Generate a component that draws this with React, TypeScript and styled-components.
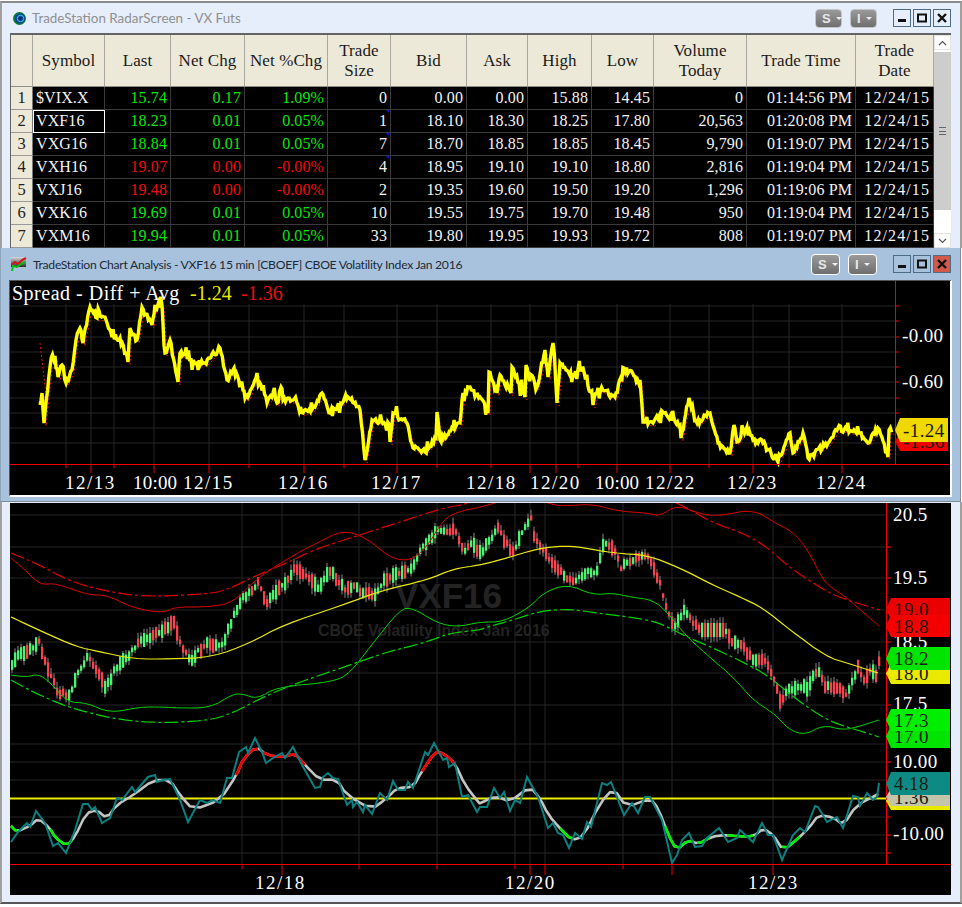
import { useMemo } from 'react';
import styled, { createGlobalStyle } from 'styled-components';

const GlobalStyle = createGlobalStyle`
  html, body { margin: 0; padding: 0; background: #fff; }
`;

const serif = `'Liberation Serif', 'Times New Roman', serif`;
const ui = `'Lato', 'Open Sans', sans-serif`;

const Page = styled.div`
  width: 962px;
  height: 907px;
  padding-top: 1px;
  box-sizing: border-box;
  overflow: hidden;
  background: #fff;
`;

const RadarWindow = styled.section`
  width: 962px;
  height: 247px;
  box-sizing: border-box;
  border-top: 2px solid #8b8b8b;
  border-left: 2px solid #a0a0a0;
  border-right: 2px solid #a0a0a0;
  background: #e6eefc;
  padding-left: 8px;
`;

const TitleBar = styled.header<{ $height: number; $active?: boolean }>`
  height: ${p => p.$height}px;
  margin-left: ${p => (p.$active ? 0 : -8)}px;
  padding: 0 9px 0 ${p => (p.$active ? 10 : 11)}px;
  display: flex;
  align-items: center;
  font-family: ${ui};
  font-size: ${p => (p.$active ? 12.2 : 13.4)}px;
  letter-spacing: ${p => (p.$active ? -0.3 : 0)}px;
  color: ${p => (p.$active ? '#1c2a38' : '#8f8f8f')};
`;

const TitleText = styled.span`
  margin-left: 6px;
  flex: 1;
  white-space: nowrap;
`;

const DropButton = styled.button<{ $active?: boolean }>`
  width: ${p => (p.$active ? 29 : 27)}px;
  height: ${p => (p.$active ? 21 : 19)}px;
  margin-right: 8px;
  padding: 0 0 0 6px;
  display: flex;
  align-items: center;
  gap: 5px;
  box-sizing: border-box;
  border: ${p => (p.$active ? '1px solid #fff' : '1px solid #c4c4c4')};
  border-radius: 4px;
  background: linear-gradient(#9a9a9a, #6e6e6e);
  color: #e8e8e8;
  font: bold 13px 'Liberation Sans', Arial, sans-serif;
  &::after {
    content: '';
    border-left: 3px solid transparent;
    border-right: 3px solid transparent;
    border-top: 3px solid #f0f0f0;
  }
`;

const CaptionGroup = styled.div`
  display: flex;
  gap: 2px;
  margin-left: 8px;
`;

const CaptionButton = styled.div<{ $close?: boolean }>`
  display: flex;
  align-items: center;
  justify-content: center;
  border: 1px solid #4d6c8a;
  box-sizing: content-box;
  width: 16px;
  height: 16px;
  background: ${p => (p.$close ? '#cf5a4a' : 'transparent')};
`;

const TableFrame = styled.div`
  display: flex;
  width: 941px;
  border-top: 2px solid #646464;
`;

const Grid = styled.div`
  width: 924px;
  border-left: 1px solid #646464;
  box-sizing: border-box;
`;

const columns = '22px 72px 66px 74px 83px 63px 76px 61px 64px 62px 93px 109px 78px';

const HeaderRow = styled.div`
  display: grid;
  grid-template-columns: ${columns};
  height: 52px;
`;

const HeaderCell = styled.div`
  display: flex;
  align-items: center;
  justify-content: center;
  box-sizing: border-box;
  background: #ece9d8;
  border-right: 1px solid #a8a8a0;
  border-bottom: 1px solid #8e8e88;
  text-align: center;
  white-space: pre;
  font: 17px/20px ${serif};
  color: #1a1a1a;
  letter-spacing: 0.1px;
`;

const DataRow = styled.div`
  display: grid;
  grid-template-columns: ${columns};
  height: 23px;
`;

const RowHead = styled.div`
  display: flex;
  align-items: center;
  justify-content: center;
  box-sizing: border-box;
  background: #ece9d8;
  border-right: 1px solid #777;
  border-bottom: 1px solid #999;
  font: 16.5px ${serif};
  color: #222;
`;

const toneColors = { up: '#0be80b', down: '#f20d0d', plain: '#f4f4f4' };

const Cell = styled.div<{
  $tone?: keyof typeof toneColors;
  $left?: boolean;
  $selected?: boolean;
  $tick?: boolean;
  $wide?: boolean;
}>`
  position: relative;
  display: flex;
  align-items: center;
  justify-content: ${p => (p.$left ? 'flex-start' : 'flex-end')};
  padding: 0 3px;
  box-sizing: border-box;
  background: #000;
  border-right: 1px solid #3a3a3a;
  border-bottom: 1px solid #3a3a3a;
  outline: ${p => (p.$selected ? '1px solid #fff' : 'none')};
  outline-offset: -1px;
  font: 16px ${serif};
  letter-spacing: ${p => (p.$wide ? 1.1 : 0.1)}px;
  white-space: nowrap;
  color: ${p => toneColors[p.$tone ?? 'plain']};
  &::after {
    content: '';
    display: ${p => (p.$tick ? 'block' : 'none')};
    position: absolute;
    top: 0;
    right: 1px;
    border-top: 3px solid #1010e0;
    border-left: 3px solid transparent;
  }
`;

const Scrollbar = styled.div`
  width: 17px;
  display: flex;
  flex-direction: column;
  background: #fff;
`;

const ScrollButton = styled.div`
  height: 15px;
  display: flex;
  align-items: center;
  justify-content: center;
  background: #fdfdfd;
  border: 1px solid #e4e4e4;
  box-sizing: border-box;
`;

const ScrollThumb = styled.div`
  height: 158px;
  margin-top: 2px;
  display: flex;
  align-items: center;
  justify-content: center;
  background: #cdcdcd;
`;

const Grip = styled.div`
  width: 7px;
  height: 6px;
  border-top: 1px solid #666;
  border-bottom: 1px solid #666;
  position: relative;
  &::after {
    content: '';
    position: absolute;
    left: 0;
    right: 0;
    top: 2.5px;
    height: 1px;
    background: #666;
  }
`;

const ScrollRest = styled.div`
  flex: 1;
  background: #fff;
`;

const ChartWindow = styled.section`
  width: 961px;
  height: 254px;
  box-sizing: border-box;
  background: #a8c2de;
  border-left: 1px solid #8fa5bc;
  border-right: 1px solid #7f8c9a;
  border-bottom: 1px solid #7f8c9a;
`;

const ChartBody = styled.div`
  margin-left: 8px;
  width: 943px;
  box-sizing: border-box;
  border-top: 1px solid #555;
  border-left: 1px solid #555;
  border-right: 2px solid #fff;
  border-bottom: 2px solid #fff;
`;

const LowerWindow = styled.section`
  width: 962px;
  height: 402px;
  box-sizing: border-box;
  background: #e6eefc;
  border-left: 2px solid #a0a0a0;
  border-right: 2px solid #a0a0a0;
  border-bottom: 2px solid #555;
  padding: 1px 0 0 8px;
`;

const ChartSvg = styled.svg`
  display: block;
  background: #000;
`;

const AxisText = styled.text<{ $spacing?: number }>`
  font-family: ${serif};
  font-size: 19px;
  letter-spacing: ${p => p.$spacing ?? 0.35}px;
  fill: #fff;
`;

const TagText = styled.text`
  font-family: ${serif};
  font-size: 19px;
  letter-spacing: 0.4px;
  fill: #1a1a10;
`;

const HeadingText = styled.text<{ $fill: string; $spacing: number }>`
  font-family: ${serif};
  font-size: 20px;
  letter-spacing: ${p => p.$spacing}px;
  fill: ${p => p.$fill};
`;

const Watermark = styled.text<{ $size: number }>`
  font-family: 'Liberation Sans', Arial, sans-serif;
  font-weight: bold;
  font-size: ${p => p.$size}px;
  fill: #232323;
`;

type Pt = [number, number];

// flat x,y list -> points
const pts = (flat: number[]): Pt[] => {
  const out: Pt[] = [];
  for (let i = 0; i < flat.length; i += 2) out.push([flat[i], flat[i + 1]]);
  return out;
};

// coordinates read off the 3x crops
const traced = (ox: number, oy: number, flat: number[]): Pt[] =>
  pts(flat).map(([x, y]) => [ox + x / 3, oy + y / 3] as Pt);

const line = (p: Pt[]) => p.map(([x, y]) => `${x.toFixed(1)},${y.toFixed(1)}`).join(' ');

// corner cutting, keeps both ends
const smooth = (p: Pt[], rounds = 2): Pt[] => {
  let cur = p;
  for (let r = 0; r < rounds; r++) {
    const next: Pt[] = [cur[0]];
    for (let i = 0; i < cur.length - 1; i++) {
      const [x0, y0] = cur[i];
      const [x1, y1] = cur[i + 1];
      next.push([x0 * 0.75 + x1 * 0.25, y0 * 0.75 + y1 * 0.25]);
      next.push([x0 * 0.25 + x1 * 0.75, y0 * 0.25 + y1 * 0.75]);
    }
    next.push(cur[cur.length - 1]);
    cur = next;
  }
  return cur;
};

const rng = (seed: number) => () => {
  seed = (seed * 16807) % 2147483647;
  return seed / 2147483647;
};

const at = (p: Pt[], x: number) => {
  for (let i = 1; i < p.length; i++) {
    if (x <= p[i][0]) {
      const [x0, y0] = p[i - 1];
      const [x1, y1] = p[i];
      return y0 + ((y1 - y0) * (x - x0)) / Math.max(x1 - x0, 0.01);
    }
  }
  return p[p.length - 1][1];
};

const rows = [
  ['$VIX.X', '15.74', '0.17', '1.09%', '0', '0.00', '0.00', '15.88', '14.45', '0', '01:14:56 PM', '12/24/15'],
  ['VXF16', '18.23', '0.01', '0.05%', '1', '18.10', '18.30', '18.25', '17.80', '20,563', '01:20:08 PM', '12/24/15'],
  ['VXG16', '18.84', '0.01', '0.05%', '7', '18.70', '18.85', '18.85', '18.45', '9,790', '01:19:07 PM', '12/24/15'],
  ['VXH16', '19.07', '0.00', '-0.00%', '4', '18.95', '19.10', '19.10', '18.80', '2,816', '01:19:04 PM', '12/24/15'],
  ['VXJ16', '19.48', '0.00', '-0.00%', '2', '19.35', '19.60', '19.50', '19.20', '1,296', '01:19:06 PM', '12/24/15'],
  ['VXK16', '19.69', '0.01', '0.05%', '10', '19.55', '19.75', '19.70', '19.48', '950', '01:19:04 PM', '12/24/15'],
  ['VXM16', '19.94', '0.01', '0.05%', '33', '19.80', '19.95', '19.93', '19.72', '808', '01:19:07 PM', '12/24/15'],
];

const headers = ['', 'Symbol', 'Last', 'Net Chg', 'Net %Chg', 'Trade\nSize', 'Bid', 'Ask', 'High', 'Low', 'Volume\nToday', 'Trade Time', 'Trade\nDate'];

const spreadTrace = pts([
  40, 405, 42, 393, 44, 423, 50, 367, 55, 356, 58, 377, 62, 365, 66, 383, 72, 370, 76, 340, 80, 328, 83, 343, 90, 307,
  97, 318, 105, 317, 112, 337, 120, 338, 128, 362, 130, 328, 137, 340, 142, 307, 152, 325, 155, 305, 162, 305, 165, 353,
  170, 340, 178, 382, 180, 353, 197, 363, 205, 363, 220, 348, 227, 380, 233, 370, 242, 383, 245, 398, 248, 397, 257, 373,
  267, 403, 273, 393, 277, 403, 281, 387, 283, 400, 293, 400, 303, 413, 315, 407, 322, 393, 330, 413, 348, 397, 360, 410,
  365, 460, 372, 420, 389, 424, 390, 442, 393, 413, 407, 423, 413, 448, 425, 452, 436, 438, 437, 412, 440, 440, 460, 423,
  463, 393, 470, 387, 480, 397, 488, 413, 489, 372, 497, 393, 500, 375, 511, 393, 512, 367, 525, 397, 526, 365, 537, 387,
  545, 350, 548, 377, 553, 343, 557, 403, 560, 363, 573, 375, 583, 368, 593, 405, 598, 388, 615, 397, 624, 368, 640, 380,
  643, 422, 653, 423, 663, 412, 680, 425, 681, 438, 689, 398, 697, 423, 710, 413, 718, 443, 730, 453, 734, 425, 737, 442,
  747, 427, 753, 440, 763, 443, 778, 462, 790, 433, 793, 453, 803, 433, 808, 458, 828, 443, 838, 428, 860, 433, 868, 443,
  878, 428, 888, 457, 889, 430, 893, 432,
]);

const priceMid = pts([
  11, 667, 15, 655, 28, 650, 38, 643, 45, 663, 57, 693, 68, 695, 77, 673, 87, 655, 97, 673, 105, 688, 115, 667, 127, 657,
  137, 643, 147, 637, 163, 630, 173, 623, 178, 640, 190, 663, 197, 652, 207, 642, 220, 648, 230, 623, 240, 600, 257, 583,
  265, 603, 277, 588, 287, 580, 295, 567, 310, 580, 317, 590, 328, 570, 345, 590, 353, 587, 373, 597, 383, 580, 395, 573,
  408, 572, 420, 550, 437, 530, 455, 530, 463, 552, 470, 543, 480, 553, 490, 538, 497, 528, 503, 540, 512, 552, 523, 527,
  530, 518, 533, 537, 545, 555, 557, 570, 570, 582, 587, 573, 595, 573, 603, 543, 613, 548, 620, 567, 633, 560, 647, 555,
  653, 570, 660, 587, 665, 607, 673, 630, 683, 608, 693, 623, 700, 630, 723, 630, 733, 643, 743, 647, 753, 663, 762, 657,
  772, 677, 780, 703, 788, 688, 807, 688, 817, 667, 823, 687, 838, 688, 845, 695, 857, 667, 863, 680, 870, 670, 875, 677,
  878, 663,
]);

const redSolid = smooth(pts([
  11, 558, 23, 568, 40, 585, 55, 583, 88, 595, 107, 595, 133, 608, 163, 613, 175, 607, 207, 607, 233, 603, 257, 578, 297, 553,
  317, 543, 343, 530, 367, 538, 390, 558, 410, 561, 427, 547, 443, 520, 457, 512, 480, 507, 492, 504, 510, 498, 535, 498, 550, 504,
  563, 506, 593, 504, 617, 511, 647, 513, 660, 516, 677, 505, 700, 514, 720, 516, 753, 509, 777, 524, 793, 532, 808, 550,
  823, 580, 833, 589, 843, 595, 857, 607, 879, 626,
]));

const redDash = smooth(pts([
  11, 553, 40, 565, 67, 580, 100, 590, 143, 597, 207, 594, 227, 590, 257, 575, 287, 563, 313, 550, 350, 538, 400, 522, 443, 508,
  467, 504, 490, 495, 660, 495, 687, 508, 713, 523, 743, 533, 767, 547, 790, 568, 827, 592, 847, 600, 880, 610,
]));

const yellowAvg = smooth(pts([
  11, 617, 43, 632, 77, 647, 97, 651, 133, 659, 170, 659, 213, 657, 250, 643, 283, 625, 343, 605, 383, 590, 427, 580, 453, 569,
  480, 565, 500, 560, 540, 548, 563, 546, 580, 547, 613, 553, 647, 555, 680, 568, 713, 585, 740, 597, 763, 608, 790, 630, 827, 657,
  847, 663, 878, 673,
]));

const greenSolid = smooth(pts([
  11, 675, 27, 677, 38, 674, 50, 682, 67, 702, 87, 703, 110, 713, 140, 707, 163, 707, 177, 708, 210, 708, 233, 694, 243, 694, 257, 699,
  277, 687, 333, 682, 350, 673, 370, 647, 400, 609, 413, 608, 437, 623, 457, 627, 480, 622, 503, 622, 530, 607, 543, 593, 567, 584,
  593, 595, 613, 593, 630, 597, 653, 600, 667, 612, 687, 637, 713, 660, 733, 677, 753, 700, 773, 713, 780, 720, 790, 730, 805, 735,
  823, 725, 843, 730, 857, 727, 879, 720,
]));

const greenDash = smooth(pts([
  11, 680, 33, 692, 67, 707, 110, 718, 150, 723, 207, 721, 233, 713, 263, 697, 297, 683, 350, 665, 387, 652, 427, 642, 450, 633, 480, 630,
  487, 627, 513, 620, 540, 611, 570, 609, 597, 613, 637, 618, 660, 623, 687, 637, 713, 648, 743, 662, 767, 675, 797, 700, 827, 720,
  847, 727, 867, 733, 879, 737,
]));

const oscFast = pts([
  11, 842, 18, 832, 22, 828, 27, 823, 30, 827, 36, 811, 45, 823, 53, 846, 58, 843, 66, 853, 75, 830, 83, 804, 88, 804, 92, 810, 95, 807,
  102, 823, 110, 818, 117, 798, 122, 800, 132, 787, 135, 792, 148, 777, 155, 775, 157, 782, 163, 780, 170, 779, 180, 800, 188, 822,
  200, 800, 207, 803, 213, 800, 220, 803, 227, 778, 232, 778, 239, 752, 246, 747, 248, 753, 255, 738, 262, 752, 266, 763, 273, 758,
  282, 753, 285, 758, 293, 747, 302, 765, 315, 788, 320, 787, 323, 777, 328, 773, 333, 778, 338, 779, 347, 805, 352, 800, 353, 807,
  357, 802, 363, 812, 365, 805, 372, 814, 380, 793, 387, 800, 393, 781, 398, 790, 405, 790, 408, 782, 413, 788, 425, 752, 428, 755,
  434, 743, 443, 760, 447, 758, 449, 767, 455, 763, 462, 797, 468, 795, 477, 812, 480, 807, 487, 807, 494, 788, 500, 798, 504, 792,
  510, 811, 515, 800, 520, 803, 527, 777, 538, 797, 548, 828, 553, 823, 558, 833, 563, 835, 569, 848, 575, 833, 582, 839, 587, 822,
  591, 827, 602, 783, 607, 785, 611, 782, 624, 815, 632, 803, 638, 813, 645, 797, 650, 797, 662, 820, 672, 863, 677, 855, 682, 840,
  689, 833, 695, 847, 702, 846, 707, 838, 719, 828, 728, 842, 737, 838, 740, 830, 753, 842, 762, 823, 768, 835, 773, 835, 782, 860,
  793, 835, 800, 828, 805, 832, 815, 806, 818, 807, 827, 822, 837, 817, 843, 828, 853, 796, 858, 797, 860, 806, 867, 793, 873, 800,
  877, 797, 879, 783,
]);

const oscSlow: Pt[] = smooth([
  ...traced(0, 720, [
    33, 318, 50, 335, 90, 318, 115, 295, 150, 325, 165, 352, 200, 378, 225, 350, 258, 280, 290, 270, 320, 295, 350, 255, 400, 225, 460, 180,
    510, 180, 540, 225, 580, 270, 660, 240, 710, 165, 730, 115, 770, 80, 800, 105, 850, 112, 885, 100, 915, 135, 960, 180, 1010, 178,
    1040, 225, 1115, 268, 1160, 235, 1190, 205, 1240, 200, 1265, 155, 1305, 95, 1330, 100, 1365, 130, 1395, 195, 1438, 250,
  ]),
  ...traced(480, 720, [
    0, 250, 45, 228, 90, 245, 150, 200, 180, 235, 205, 285, 240, 325, 275, 360, 310, 350, 360, 250, 400, 205, 440, 262, 510, 235, 535, 265,
    565, 345, 590, 390, 625, 360, 655, 372, 695, 350, 735, 345, 770, 348, 820, 350, 850, 325, 880, 345, 910, 392, 960, 350, 990, 320,
    1015, 285, 1060, 292, 1090, 315, 1130, 255, 1195, 222,
  ]),
], 1);

const oscBands: { from: number; to: number; color: string }[] = [
  { from: 11, to: 17, color: '#00f000' },
  { from: 50, to: 72, color: '#00f000' },
  { from: 236, to: 258, color: '#f00000' },
  { from: 263, to: 305, color: '#f00000' },
  { from: 422, to: 455, color: '#f00000' },
  { from: 560, to: 572, color: '#00f000' },
  { from: 665, to: 693, color: '#00f000' },
  { from: 697, to: 710, color: '#00f000' },
  { from: 727, to: 753, color: '#00f000' },
  { from: 782, to: 800, color: '#00f000' },
];

const band = (p: Pt[], from: number, to: number): Pt[] => [
  [from, at(p, from)],
  ...p.filter(([x]) => x > from && x < to),
  [to, at(p, to)],
];

function Tag({ top, height, fill, label, x = 886, right = 950 }: { top: number; height: number; fill: string; label: string; x?: number; right?: number }) {
  const mid = top + height / 2;
  return (
    <g>
      <polygon points={`${x},${mid} ${x + 5},${top} ${right},${top} ${right},${top + height} ${x + 5},${top + height}`} fill={fill} />
      <TagText x={x + 8} y={mid + 6.5}>
        {label}
      </TagText>
    </g>
  );
}

function WindowButtons({ active }: { active?: boolean }) {
  return (
    <>
      <DropButton $active={active}>S</DropButton>
      <DropButton $active={active}>I</DropButton>
      <CaptionGroup>
        <CaptionButton>
          <svg width="10" height="10" viewBox="0 0 10 10">
            <rect x="1" y="6" width="8" height="3" fill="#111" />
          </svg>
        </CaptionButton>
        <CaptionButton>
          <svg width="10" height="10" viewBox="0 0 10 10">
            <rect x="1" y="1.5" width="8" height="7" fill="none" stroke="#111" strokeWidth="2" />
          </svg>
        </CaptionButton>
        <CaptionButton $close={active}>
          <svg width="10" height="10" viewBox="0 0 10 10">
            <path d="M1 1 L9 9 M9 1 L1 9" stroke="#111" strokeWidth="2.4" />
          </svg>
        </CaptionButton>
      </CaptionGroup>
    </>
  );
}

function RadarIcon() {
  return (
    <svg width="13" height="13" viewBox="0 0 13 13">
      <circle cx="6.5" cy="6.5" r="6.5" fill="#0a7a3a" />
      <circle cx="7" cy="6.5" r="5" fill="#0d3f9e" />
      <circle cx="7.5" cy="6.5" r="3.2" fill="none" stroke="#3fd0d8" strokeWidth="1" />
      <circle cx="7.5" cy="6.5" r="1.2" fill="#16245e" />
    </svg>
  );
}

function ChartIcon() {
  return (
    <svg width="16" height="15" viewBox="0 0 16 15">
      <defs>
        <linearGradient id="chartIconBg" x1="0" y1="0" x2="0" y2="1">
          <stop offset="0" stopColor="#d8d8d8" />
          <stop offset="1" stopColor="#2a2a2a" />
        </linearGradient>
      </defs>
      <rect x="0" y="0" width="15" height="10" fill="url(#chartIconBg)" />
      <path d="M0 8 L4 5 L7 7 L11 3 L15 1" fill="none" stroke="#d01818" strokeWidth="2" />
      <path d="M1 14 L2 9 L6 10 L10 7 L14 5" fill="none" stroke="#14b814" strokeWidth="2" />
    </svg>
  );
}

function SpreadChart() {
  const jagged = useMemo(() => {
    const r = rng(41);
    const out: Pt[] = [];
    for (let i = 1; i < spreadTrace.length; i++) {
      const [x0, y0] = spreadTrace[i - 1];
      const [x1, y1] = spreadTrace[i];
      const n = Math.max(1, Math.round((x1 - x0) / 1.2));
      for (let k = 0; k < n; k++) {
        const t = k / n;
        const spike = r() < 0.15 ? (r() - 0.5) * 20 : (r() - 0.5) * 6;
        out.push([x0 + (x1 - x0) * t, y0 + (y1 - y0) * t + (k === 0 ? 0 : spike)]);
      }
    }
    return out;
  }, []);
  const average = spreadTrace.map(([x, y]) => [x + 2, y + 3] as Pt);
  const hLines = Array.from({ length: 10 }, (_, i) => Math.round(306 + i * 15.25));
  const minor = [66, 114, 249, 344, 437, 491, 578, 709, 789];
  const major = [91, 154, 209, 304, 397, 530, 556, 617, 670, 753, 842];
  const dates: [string, number, number][] = [
    ['12/13', 65, 1.5], ['10:00', 133, 0.2], ['12/15', 183, 1.5], ['12/16', 278, 1.5], ['12/17', 371, 1.5], ['12/18', 466, 1.5],
    ['12/20', 530, 1.5], ['10:00', 595, 0.2], ['12/22', 645, 1.5], ['12/23', 727, 1.5], ['12/24', 816, 1.5],
  ];
  return (
    <ChartSvg width="940" height="214" viewBox="10 281 940 214">
      {hLines.map(y => (
        <line key={y} x1="10" x2="895" y1={y} y2={y} stroke="#242424" />
      ))}
      {[...minor, ...major].map(x => (
        <line key={x} x1={x} x2={x} y1="304" y2="464" stroke="#242424" />
      ))}
      <polyline points={line([[40, 343], [46, 395]])} fill="none" stroke="#e01010" strokeDasharray="2 2" />
      <polyline points={line(average)} fill="none" stroke="#e01010" strokeDasharray="2 2" />
      <polyline points={line(jagged)} fill="none" stroke="#ffff00" strokeWidth="3.4" strokeLinejoin="miter" />
      <line x1="10" x2="950" y1="464.5" y2="464.5" stroke="#f00000" />
      <line x1="895.5" x2="895.5" y1="281" y2="464" stroke="#f00000" />
      {hLines.map(y => (
        <line key={y} x1="895" x2="899" y1={y} y2={y} stroke="#f00000" />
      ))}
      {minor.map(x => (
        <line key={x} x1={x} x2={x} y1="464" y2="468" stroke="#f00000" />
      ))}
      {major.map(x => (
        <line key={x} x1={x} x2={x} y1="464" y2="473" stroke="#f00000" />
      ))}
      <AxisText x="902" y="342">-0.00</AxisText>
      <AxisText x="902" y="388">-0.60</AxisText>
      {dates.map(([d, x, s]) => (
        <AxisText key={d + x} x={x} y="489" $spacing={s}>
          {d}
        </AxisText>
      ))}
      <HeadingText x="12" y="300" $fill="#fff" $spacing={0.5}>Spread - Diff + Avg</HeadingText>
      <HeadingText x="190" y="300" $fill="#e8e800" $spacing={0}>-1.24</HeadingText>
      <HeadingText x="241" y="300" $fill="#e81010" $spacing={0}>-1.36</HeadingText>
      <Tag top={432} height={19} fill="#ee0000" label="-1.36" x={895} right={948} />
      <Tag top={418} height={24} fill="#f0d800" label="-1.24" x={895} right={948} />
    </ChartSvg>
  );
}

function PriceChart() {
  const candles = useMemo(() => {
    const r = rng(977);
    const out: { x: number; top: number; h: number; wt: number; wb: number; up: boolean }[] = [];
    for (let x = 11; x < 880; x += 3) {
      const flat = x > 700 && x < 725;
      const mid = at(priceMid, x) + (flat ? 0 : (r() - 0.5) * 4);
      const h = flat ? 14 : 4 + r() * 11;
      const slope = at(priceMid, x + 6) - at(priceMid, x - 6);
      const up = flat ? Math.round((x - 11) / 3) % 2 === 0 : r() + slope * 0.03 < 0.5;
      out.push({ x, top: mid - h / 2, h, wt: r() * 6, wb: r() * 6, up });
    }
    return out;
  }, []);
  const hLines = [515, 547, 578, 610, 642, 673, 705, 744, 762, 780, 817, 835, 853];
  const minor = [242, 359, 437, 515, 623];
  const major = [282, 530, 545, 672, 773];
  return (
    <ChartSvg width="941" height="392" viewBox="10 503 941 392">
      {hLines.map(y => (
        <line key={y} x1="10" x2="886" y1={y} y2={y} stroke="#242424" />
      ))}
      {[...minor, ...major].map(x => (
        <line key={x} x1={x} x2={x} y1="503" y2="864" stroke="#242424" />
      ))}
      <Watermark x="395" y="608" $size={35}>VXF16</Watermark>
      <Watermark x="318" y="636" $size={15.8}>CBOE Volatility Index Jan 2016</Watermark>
      {candles.map(c => (
        <g key={c.x}>
          <line x1={c.x + 1} x2={c.x + 1} y1={c.top - c.wt} y2={c.top + c.h + c.wb} stroke="#8a8a8a" />
          <rect x={c.x} y={c.top} width="2.3" height={c.h} fill={c.up ? '#4cf272' : '#f8434f'} />
        </g>
      ))}
      <polyline points={line(redSolid)} fill="none" stroke="#dc0000" />
      <polyline points={line(redDash)} fill="none" stroke="#e00000" strokeWidth="1.2" strokeDasharray="14 3 3 3" />
      <polyline points={line(yellowAvg)} fill="none" stroke="#eaea10" strokeWidth="1.2" />
      <polyline points={line(greenSolid)} fill="none" stroke="#00d400" />
      <polyline points={line(greenDash)} fill="none" stroke="#00d400" strokeWidth="1.2" strokeDasharray="14 3 3 3" />
      <line x1="10" x2="886" y1="798.5" y2="798.5" stroke="#eeee00" strokeWidth="2" />
      <polyline points={line(oscSlow)} fill="none" stroke="#c4c4c4" strokeWidth="2.6" strokeLinejoin="round" />
      {oscBands.map(b => (
        <polyline key={b.from} points={line(band(oscSlow, b.from, b.to))} fill="none" stroke={b.color} strokeWidth="2.6" strokeLinejoin="round" />
      ))}
      <polyline points={line(oscFast)} fill="none" stroke="#0c8080" strokeWidth="2" />
      <line x1="10" x2="951" y1="864.5" y2="864.5" stroke="#f00000" />
      <line x1="886.5" x2="886.5" y1="503" y2="864" stroke="#f00000" />
      {[547, 578, 610, 642, 673, 705, 762, 817, 835, 853].map(y => (
        <line key={y} x1="886" x2="891" y1={y} y2={y} stroke="#f00000" />
      ))}
      {minor.map(x => (
        <line key={x} x1={x} x2={x} y1="864" y2="869" stroke="#f00000" />
      ))}
      {major.map(x => (
        <line key={x} x1={x} x2={x} y1="864" y2="875" stroke="#f00000" />
      ))}
      <AxisText x="893" y="521">20.5</AxisText>
      <AxisText x="893" y="584">19.5</AxisText>
      <AxisText x="893" y="648">18.5</AxisText>
      <AxisText x="893" y="710">17.5</AxisText>
      <AxisText x="893" y="768">10.00</AxisText>
      <AxisText x="893" y="840">-10.00</AxisText>
      <Tag top={598} height={22} fill="#ea0000" label="19.0" />
      <Tag top={615} height={22} fill="#f40000" label="18.8" />
      <Tag top={663} height={21} fill="#eaea00" label="18.0" />
      <Tag top={647} height={23} fill="#00e400" label="18.2" />
      <Tag top={725} height={23} fill="#00e400" label="17.0" />
      <Tag top={709} height={22} fill="#00ee00" label="17.3" />
      <Tag top={792} height={18} fill="#eaea00" label="" />
      <Tag top={788} height={18} fill="#c4c4aa" label="1.36" />
      <Tag top={772} height={23} fill="#0e8a84" label="4.18" />
      <AxisText x="255" y="889" $spacing={1.5}>12/18</AxisText>
      <AxisText x="505" y="889" $spacing={1.5}>12/20</AxisText>
      <AxisText x="748" y="889" $spacing={1.5}>12/23</AxisText>
    </ChartSvg>
  );
}

export default function App() {
  return (
    <Page>
      <GlobalStyle />
      <RadarWindow>
        <TitleBar $height={30}>
          <RadarIcon />
          <TitleText>TradeStation RadarScreen - VX Futs</TitleText>
          <WindowButtons />
        </TitleBar>
        <TableFrame>
          <Grid>
            <HeaderRow>
              {headers.map((h, i) => (
                <HeaderCell key={i}>{h}</HeaderCell>
              ))}
            </HeaderRow>
            {rows.map((row, r) => (
              <DataRow key={row[0]}>
                <RowHead>{r + 1}</RowHead>
                {row.map((value, c) => {
                  const change = c >= 1 && c <= 3;
                  const falling = row[3].startsWith('-');
                  return (
                    <Cell
                      key={c}
                      $left={c === 0}
                      $wide={c === 11}
                      $tone={change ? (falling ? 'down' : 'up') : 'plain'}
                      $selected={r === 1 && c === 0}
                      $tick={c === 4 && r >= 1 && r <= 3}
                    >
                      {value}
                    </Cell>
                  );
                })}
              </DataRow>
            ))}
          </Grid>
          <Scrollbar>
            <ScrollButton>
              <svg width="9" height="6" viewBox="0 0 9 6">
                <path d="M1 5 L4.5 1.5 L8 5" fill="none" stroke="#555" strokeWidth="1.2" />
              </svg>
            </ScrollButton>
            <ScrollThumb>
              <Grip />
            </ScrollThumb>
            <ScrollRest />
            <ScrollButton>
              <svg width="9" height="6" viewBox="0 0 9 6">
                <path d="M1 1 L4.5 4.5 L8 1" fill="none" stroke="#555" strokeWidth="1.2" />
              </svg>
            </ScrollButton>
          </Scrollbar>
        </TableFrame>
      </RadarWindow>
      <ChartWindow>
        <TitleBar $height={32} $active>
          <ChartIcon />
          <TitleText>TradeStation Chart Analysis - VXF16 15 min [CBOEF] CBOE Volatility Index Jan 2016</TitleText>
          <WindowButtons active />
        </TitleBar>
        <ChartBody>
          <SpreadChart />
        </ChartBody>
      </ChartWindow>
      <LowerWindow>
        <PriceChart />
      </LowerWindow>
    </Page>
  );
}
